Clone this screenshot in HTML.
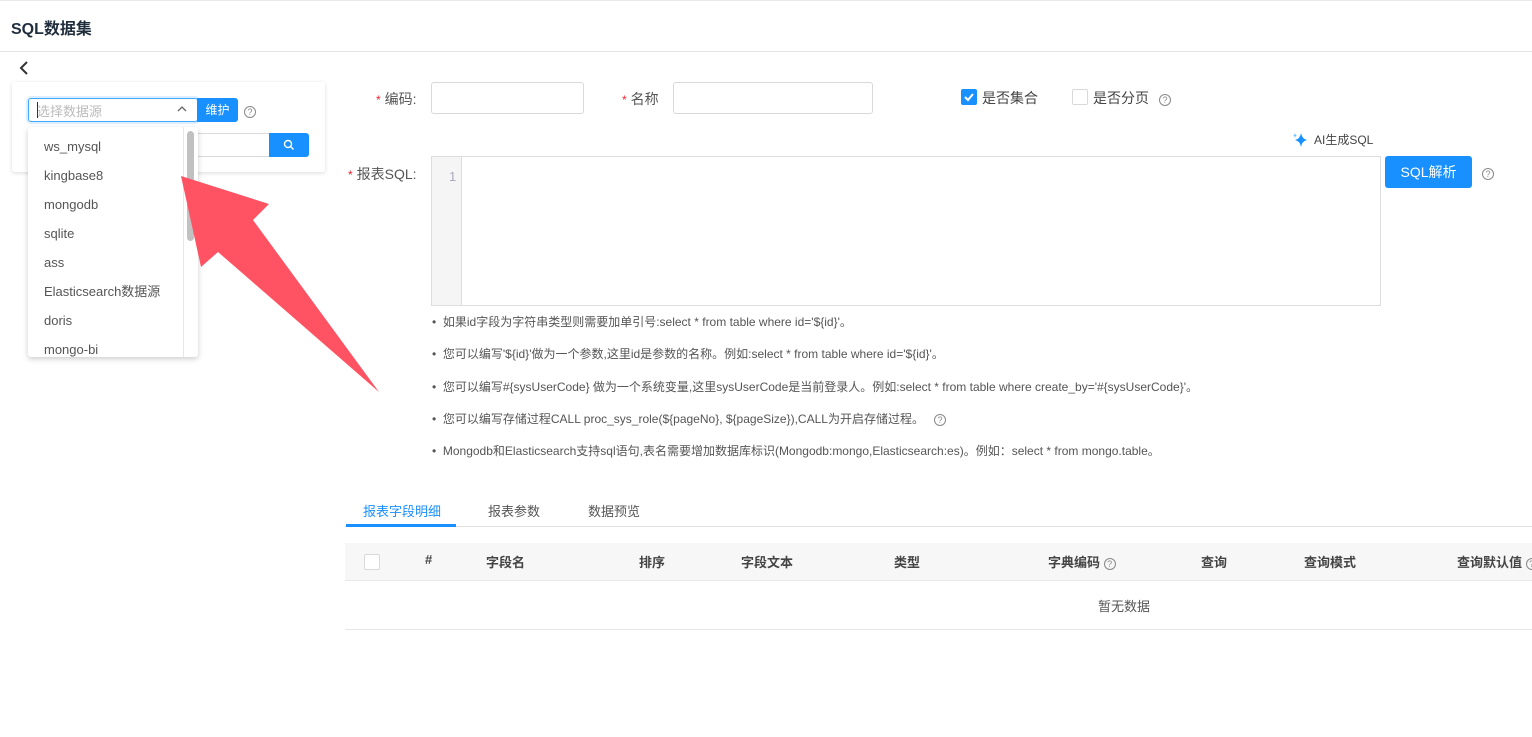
<!DOCTYPE html>
<html><head><meta charset="utf-8"><style>
*{box-sizing:border-box;margin:0;padding:0}
body{width:1532px;height:737px;background:#fff;font-family:"Liberation Sans","Noto Sans CJK SC",sans-serif;color:#333;position:relative;overflow:hidden;font-size:13px}
.a{position:absolute;white-space:nowrap}
.lbl{font-size:14px;color:#555}
.st{color:#f5222d;margin-right:4px;font-size:12px}
.inp{position:absolute;border:1px solid #d9d9d9;border-radius:3px;background:#fff}
.q{display:inline-block;width:12px;height:12px;border:1px solid #888;border-radius:50%;font-size:9px;line-height:10px;text-align:center;color:#888}
.tip{font-size:12px;color:#555}
.th{font-size:13px;color:#444;font-weight:bold}
</style></head><body>
<div class="a" style="left:0;top:0;width:1532px;height:1px;background:#e8e8e8"></div>
<div class="a" style="left:11px;top:15px;font-size:16px;font-weight:bold;color:#1f2d3d">SQL数据集</div>
<div class="a" style="left:0;top:51px;width:1532px;height:1px;background:#e4e4e4"></div>
<svg class="a" style="left:17px;top:60px" width="14" height="16"><path d="M10 2 L4 8 L10 14" fill="none" stroke="#333" stroke-width="2"/></svg>

<div class="a" style="left:12px;top:82px;width:313px;height:90px;background:#fff;box-shadow:0 1px 4px rgba(0,0,0,.15);border-radius:3px"></div>
<div class="inp" style="left:28px;top:98px;width:170px;height:24px;border-color:#40a9ff;box-shadow:0 0 0 2px rgba(24,144,255,.15)"></div>
<div class="a" style="left:37px;top:101px;font-size:13px;color:#bbb">选择数据源</div>
<div class="a" style="left:37px;top:102px;width:1px;height:16px;background:#333"></div>
<svg class="a" style="left:177px;top:105px" width="10" height="8"><path d="M1 6 L5 2 L9 6" fill="none" stroke="#666" stroke-width="1.3"/></svg>
<div class="a" style="left:197px;top:98px;width:41px;height:24px;background:#1890ff;border-radius:0 3px 3px 0;color:#fff;font-size:12px;text-align:center;line-height:24px">维护</div>
<div class="a" style="left:244px;top:103px"><span class="q">?</span></div>
<div class="inp" style="left:190px;top:133px;width:80px;height:24px;border-radius:0"></div>
<div class="a" style="left:269px;top:133px;width:40px;height:24px;background:#1890ff;border-radius:0 3px 3px 0"></div>
<svg class="a" style="left:283px;top:139px" width="12" height="12"><circle cx="5" cy="5" r="3.5" fill="none" stroke="#fff" stroke-width="1.4"/><path d="M7.5 7.5 L10.5 10.5" stroke="#fff" stroke-width="1.4"/></svg>

<div class="a" style="left:28px;top:127px;width:170px;height:230px;background:#fff;box-shadow:0 2px 6px rgba(0,0,0,.2);border-radius:3px;overflow:hidden">
 <div style="position:absolute;left:155px;top:0;width:1px;height:230px;background:#e8e8e8"></div>
 <div style="position:absolute;left:159px;top:4px;width:7px;height:110px;background:#c1c1c1;border-radius:4px"></div>
 <div style="position:absolute;left:16px;top:5px;line-height:29px;font-size:13px;color:#555">ws_mysql<br>kingbase8<br>mongodb<br>sqlite<br>ass<br>Elasticsearch数据源<br>doris<br>mongo-bi</div>
</div>

<svg class="a" style="left:0;top:0" width="400" height="400"><polygon points="181,176 269,204 253,220 379,392 218,252 201,267" fill="#ff5263"/></svg>

<div class="a lbl" style="left:376px;top:89px"><span class="st">*</span>编码:</div>
<div class="inp" style="left:431px;top:82px;width:153px;height:32px"></div>
<div class="a lbl" style="left:622px;top:89px"><span class="st">*</span>名称</div>
<div class="inp" style="left:673px;top:82px;width:200px;height:32px"></div>
<div class="a" style="left:961px;top:89px;width:16px;height:16px;background:#1890ff;border-radius:2px"><svg width="16" height="16"><path d="M4 8 L7 11 L12 5" fill="none" stroke="#fff" stroke-width="2"/></svg></div>
<div class="a lbl" style="left:982px;top:88px;color:#444">是否集合</div>
<div class="a" style="left:1072px;top:89px;width:16px;height:16px;border:1px solid #d9d9d9;border-radius:2px"></div>
<div class="a lbl" style="left:1093px;top:88px;color:#444">是否分页</div>
<div class="a" style="left:1159px;top:91px"><span class="q">?</span></div>

<svg class="a" style="left:1291px;top:131px" width="18" height="18"><path d="M10 2 Q11 8 16 9 Q11 10 10 16 Q9 10 4 9 Q9 8 10 2Z" fill="#1890ff"/><path d="M4 2 L4.7 4 L6 4.5 L4.7 5 L4 7 L3.3 5 L2 4.5 L3.3 4Z" fill="#69c0ff"/></svg>
<div class="a" style="left:1314px;top:131px;font-size:12px;color:#444">AI生成SQL</div>

<div class="a lbl" style="left:348px;top:164px"><span class="st">*</span>报表SQL:</div>
<div class="a" style="left:431px;top:156px;width:950px;height:150px;border:1px solid #ddd"></div>
<div class="a" style="left:432px;top:157px;width:30px;height:148px;background:#f5f5f5;border-right:1px solid #ddd"></div>
<div class="a" style="left:449px;top:169px;font-size:13px;color:#aab">1</div>
<div class="a" style="left:1385px;top:156px;width:87px;height:32px;background:#1890ff;border-radius:3px;color:#fff;font-size:14px;text-align:center;line-height:32px">SQL解析</div>
<div class="a" style="left:1482px;top:165px"><span class="q">?</span></div>

<div class="a tip" style="left:432px;top:306px;line-height:32.3px">
• &nbsp;如果id字段为字符串类型则需要加单引号:select * from table where id='${id}'。<br>
• &nbsp;您可以编写'${id}'做为一个参数,这里id是参数的名称。例如:select * from table where id='${id}'。<br>
• &nbsp;您可以编写#{sysUserCode} 做为一个系统变量,这里sysUserCode是当前登录人。例如:select * from table where create_by='#{sysUserCode}'。<br>
• &nbsp;您可以编写存储过程CALL proc_sys_role(${pageNo}, ${pageSize}),CALL为开启存储过程。 &nbsp; <span class="q">?</span><br>
• &nbsp;Mongodb和Elasticsearch支持sql语句,表名需要增加数据库标识(Mongodb:mongo,Elasticsearch:es)。例如：select * from mongo.table。
</div>

<div class="a" style="left:363px;top:501px;font-size:13px;color:#1890ff">报表字段明细</div>
<div class="a" style="left:488px;top:501px;font-size:13px;color:#555">报表参数</div>
<div class="a" style="left:588px;top:501px;font-size:13px;color:#555">数据预览</div>
<div class="a" style="left:345px;top:526px;width:1187px;height:1px;background:#e0e0e0"></div>
<div class="a" style="left:346px;top:524px;width:110px;height:3px;background:#1890ff"></div>

<div class="a" style="left:345px;top:543px;width:1187px;height:38px;background:#f7f7f7;border-bottom:1px solid #e8e8e8"></div>
<div class="a" style="left:364px;top:554px;width:16px;height:16px;border:1px solid #d9d9d9;border-radius:2px;background:#fff"></div>
<div class="a th" style="left:425px;top:552px">#</div>
<div class="a th" style="left:486px;top:552px">字段名</div>
<div class="a th" style="left:639px;top:552px">排序</div>
<div class="a th" style="left:741px;top:552px">字段文本</div>
<div class="a th" style="left:894px;top:552px">类型</div>
<div class="a th" style="left:1048px;top:552px">字典编码 <span class="q" style="font-weight:normal">?</span></div>
<div class="a th" style="left:1201px;top:552px">查询</div>
<div class="a th" style="left:1304px;top:552px">查询模式</div>
<div class="a th" style="left:1457px;top:552px">查询默认值 <span class="q" style="font-weight:normal">?</span></div>
<div class="a" style="left:1098px;top:596px;font-size:13px;color:#555">暂无数据</div>
<div class="a" style="left:345px;top:629px;width:1187px;height:1px;background:#e8e8e8"></div>
</body></html>
